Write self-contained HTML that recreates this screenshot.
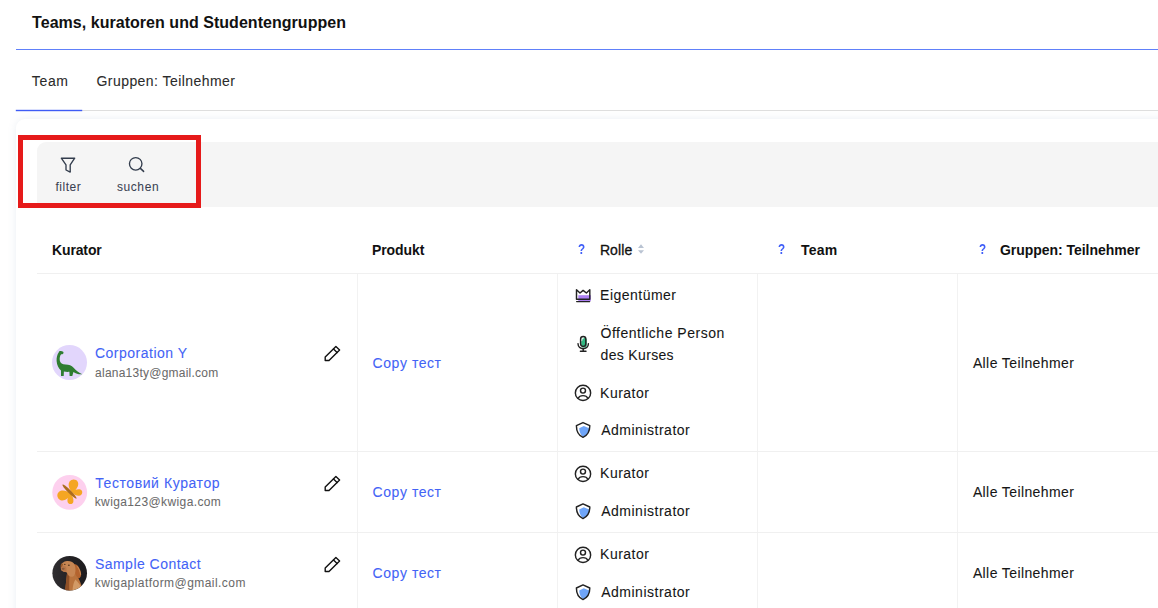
<!DOCTYPE html>
<html lang="de">
<head>
<meta charset="utf-8">
<title>Teams, kuratoren und Studentengruppen</title>
<style>
*{box-sizing:border-box;margin:0;padding:0}
html,body{width:1158px;height:608px;overflow:hidden;background:#fff}
body{font-family:"Liberation Sans",sans-serif;color:#161616;position:relative;font-size:14px}
.a{position:absolute}
.t{position:absolute;white-space:nowrap;line-height:20px}
svg{position:absolute;overflow:visible}
.hline{left:16px;top:49px;width:1142px;height:1px;background:#6080fa}
.tabline{left:16px;top:110px;width:1142px;height:1px;background:#dedede}
.tabact{left:16px;top:110px;width:66px;height:1px;background:#3f5cf5;box-shadow:0 0 0 .2px #3f5cf5}
.card{left:16px;top:118.5px;width:1180px;height:520px;background:#fff;border-radius:9px;box-shadow:0 0 9px rgba(100,130,170,.13)}
.toolbar{left:37px;top:142px;width:1140px;height:65px;background:#f5f5f5;border-top-left-radius:9px}
.red{left:17.5px;top:135px;width:183.5px;height:73px;border:5px solid #e61a1a}
.hb{left:37px;width:1121px;height:1px;background:#f0f0f0}
.vb{top:274px;width:1px;height:340px;background:#f2f2f2}
</style>
</head>
<body>
<div class="a hline"></div>
<div class="a tabline"></div>
<div class="a tabact"></div>
<div class="a card"></div>
<div class="a toolbar"></div>

<!-- toolbar icons -->
<svg style="left:0;top:0" width="1158" height="608" viewBox="0 0 1158 608" fill="none" stroke-linecap="round" stroke-linejoin="round">
  <!-- funnel -->
  <path d="M61.3 158.2H74.7L70.2 164.9V172.1L66 170V164.9Z" stroke="#333d4d" stroke-width="1.35"/>
  <!-- search -->
  <circle cx="135.7" cy="163.8" r="6.25" stroke="#333d4d" stroke-width="1.35"/>
  <path d="M140.4 168.4L143.6 171.4" stroke="#333d4d" stroke-width="1.5"/>
  <!-- sort arrows -->
  <path d="M641 244.2L644 248H638Z" fill="#b9c3d2" stroke="none"/>
  <path d="M641 253.8L644 250.2H638Z" fill="#b9c3d2" stroke="none"/>
</svg>

<div class="a red"></div>

<div class="a hb" style="top:273px"></div>
<div class="a vb" style="left:357px"></div>
<div class="a vb" style="left:557px"></div>
<div class="a vb" style="left:757px"></div>
<div class="a vb" style="left:957px"></div>
<div class="a hb" style="top:451px"></div>
<div class="a hb" style="top:532px"></div>

<svg style="left:0;top:0" width="1158" height="608" viewBox="0 0 1158 608" fill="none" stroke-linecap="round" stroke-linejoin="round">
<g transform="translate(0 0)">
<rect x="578.3" y="295.2" width="12.5" height="5.9" fill="#ad80f3"/>
<path d="M576.5 289.8L580 293L583.1 290.4L586.4 293L589.8 289.8V299.3H576.5Z" stroke="#222" stroke-width="1.45" fill="none"/>
<path d="M576.7 301.6H589.6" stroke="#222" stroke-width="1.45"/></g>
<g transform="translate(0 0)">
<rect x="581.2" y="337.6" width="5.6" height="10" rx="2.6" fill="#2fb982"/>
<path d="M581.6 340.5C581.6 338.6 582.6 337.8 583.6 337.8" stroke="#eafaf3" stroke-width="1.4" fill="none"/>
<rect x="580.6" y="336.5" width="5.2" height="9.9" rx="2.6" stroke="#222" stroke-width="1.45" fill="none"/>
<path d="M578 343.6C578 350.4 588.4 350.4 588.4 343.6" stroke="#222" stroke-width="1.45" fill="none"/>
<path d="M583.2 348.8V351.3M580.4 351.3H586" stroke="#222" stroke-width="1.45"/></g>
<g transform="translate(0 0)">
<circle cx="583" cy="392.9" r="7.65" stroke="#222" stroke-width="1.45" fill="none"/>
<circle cx="583" cy="390.6" r="2.5" stroke="#222" stroke-width="1.45" fill="none"/>
<path d="M578.3 398.1C579.6 394.8 586.4 394.8 587.7 398.1" stroke="#222" stroke-width="1.45" fill="none"/></g>
<g transform="translate(0 0)">
<path d="M583.8 426L589.2 428.2C589.2 432 587.6 435 583.4 437C580.6 435.2 579.2 431.5 579.2 428.2Z" fill="#6fa5f8"/>
<path d="M583 422.6L589.8 425.7C589.8 431.2 588 435.1 583 437.3C578 435.1 576.4 431.2 576.4 425.7Z" stroke="#222" stroke-width="1.45" fill="none"/></g>
<g transform="translate(0 0)">
<path d="M325.2 357.1L335.9 346.4L339.6 349.9L329 360.5H325.2Z" stroke="#111" stroke-width="1.4" fill="none"/>
<path d="M333.5 349L337.1 352.5" stroke="#111" stroke-width="1.4"/></g>
<g transform="translate(0 81)">
<circle cx="583" cy="392.9" r="7.65" stroke="#222" stroke-width="1.45" fill="none"/>
<circle cx="583" cy="390.6" r="2.5" stroke="#222" stroke-width="1.45" fill="none"/>
<path d="M578.3 398.1C579.6 394.8 586.4 394.8 587.7 398.1" stroke="#222" stroke-width="1.45" fill="none"/></g>
<g transform="translate(0 81.3)">
<path d="M583.8 426L589.2 428.2C589.2 432 587.6 435 583.4 437C580.6 435.2 579.2 431.5 579.2 428.2Z" fill="#6fa5f8"/>
<path d="M583 422.6L589.8 425.7C589.8 431.2 588 435.1 583 437.3C578 435.1 576.4 431.2 576.4 425.7Z" stroke="#222" stroke-width="1.45" fill="none"/></g>
<g transform="translate(0 130)">
<path d="M325.2 357.1L335.9 346.4L339.6 349.9L329 360.5H325.2Z" stroke="#111" stroke-width="1.4" fill="none"/>
<path d="M333.5 349L337.1 352.5" stroke="#111" stroke-width="1.4"/></g>
<g transform="translate(0 162)">
<circle cx="583" cy="392.9" r="7.65" stroke="#222" stroke-width="1.45" fill="none"/>
<circle cx="583" cy="390.6" r="2.5" stroke="#222" stroke-width="1.45" fill="none"/>
<path d="M578.3 398.1C579.6 394.8 586.4 394.8 587.7 398.1" stroke="#222" stroke-width="1.45" fill="none"/></g>
<g transform="translate(0 162.3)">
<path d="M583.8 426L589.2 428.2C589.2 432 587.6 435 583.4 437C580.6 435.2 579.2 431.5 579.2 428.2Z" fill="#6fa5f8"/>
<path d="M583 422.6L589.8 425.7C589.8 431.2 588 435.1 583 437.3C578 435.1 576.4 431.2 576.4 425.7Z" stroke="#222" stroke-width="1.45" fill="none"/></g>
<g transform="translate(0 211)">
<path d="M325.2 357.1L335.9 346.4L339.6 349.9L329 360.5H325.2Z" stroke="#111" stroke-width="1.4" fill="none"/>
<path d="M333.5 349L337.1 352.5" stroke="#111" stroke-width="1.4"/></g>
<circle cx="69.5" cy="362.5" r="17.5" fill="#e2d6fc"/>
<path d="M58.7 352.4C59 351 60.6 350.6 61.7 351.3C62.9 351.2 63.7 352 63.5 352.9C63.3 353.9 62.2 354.4 61.2 354.2C60 355.3 59.4 358 59.8 360.6C60.2 363.4 62.4 364.5 65.6 364.5C69 364.5 71.6 365.6 73.6 367.8C76 370.4 79 372.8 82.3 374.2C79.2 374.6 76.2 373.8 73.4 372L72.3 375.9H69.6L69.4 371.8C67.8 372 65.6 371.9 63.9 371.5L63.7 375.9H61L61 370.6C58.6 368.6 56.9 365 56.6 361C56.4 357.4 57.3 354.2 58.7 352.4Z" fill="#2f7d32" stroke="none"/>
<circle cx="69.7" cy="492.4" r="17.4" fill="#fdd0ee"/>
<g fill="#f5a623" stroke="none">
<path d="M71.6 492.2C69 488.5 67.6 484.5 69.6 481.6C71.6 478.8 76.2 478.9 77.8 482C79.4 485.2 76.6 489.6 72.6 492.6Z"/>
<path d="M72.2 491.6C74.8 489.6 78.6 488.6 80.8 489.8C83 491.2 82.6 494.4 80.2 495.4C77.6 496.4 74.4 495 72.4 493Z"/>
<path d="M70 493.4C66.5 490.4 61.6 489.6 58.8 492C56.2 494.4 57.2 498.8 60.6 500.2C64.2 501.6 68.4 498.4 70.6 494.6Z"/>
<path d="M69.6 494.2C67.4 497 66.6 501.2 68.4 503.2C70.2 505 73 504 73.4 501.4C73.8 498.8 72.4 496 71 494Z"/>
</g>
<ellipse cx="69.5" cy="491.6" rx="9.9" ry="1.55" transform="rotate(45 69.5 491.6)" fill="#ab6d1e" stroke="none"/>
<clipPath id="c3"><circle cx="69.7" cy="573.2" r="17.3"/></clipPath>
<linearGradient id="g3" x1="0" y1="0" x2="1" y2="0"><stop offset="0" stop-color="#302e31"/><stop offset="0.5" stop-color="#232124"/><stop offset="1" stop-color="#1e1c1f"/></linearGradient>
<filter id="b3" x="-10%" y="-10%" width="120%" height="120%"><feGaussianBlur stdDeviation="0.45"/></filter>
<circle cx="69.7" cy="573.2" r="17.3" fill="url(#g3)"/>
<g clip-path="url(#c3)" stroke="none"><g filter="url(#b3)">
<path d="M65 592C65.6 586 66.4 579.5 67 573.5L75.8 572C77.6 576.5 80.2 581.5 81.6 586L82.2 592Z" fill="#b9733d"/>
<path d="M65 592C65.6 586 66.4 579.5 67 573.5L69.6 573.5C69.2 579 69 586 69.4 592Z" fill="#8e4f26"/>
<path d="M72.4 592C72.6 587 73.4 582.5 75.4 579.5C77.6 581.5 80 584.5 81.4 587.5L82 592Z" fill="#d29a66"/>
<path d="M73.6 564C76.8 563.8 79 566.6 80.4 570.6C81.6 574 81.4 577 79.6 578C78 578.6 76.6 577 75.6 574.6C74.6 571.8 74 567.4 73.6 564Z" fill="#b4642e"/>
<path d="M77.4 566.6C79 568.6 80.2 571.6 80.6 574.4" stroke="#d79b66" stroke-width="0.7" fill="none"/>
<path d="M61 566.6C61 563.6 63.6 561.4 67 561C70.6 560.8 73.8 562.2 74.8 565.2C75.8 568.4 75.8 572.4 74.4 575.2C73.2 577.2 70.2 577.4 68.6 575.6C67.6 574.4 67.4 573 66.4 572.2C64.8 572 62.4 571.6 61.4 570.2C60.8 569.2 60.9 567.8 61 566.6Z" fill="#c78653"/>
<path d="M61 566.2C60.8 567.8 60.8 569.2 61.4 570.2C62.4 571.4 64.6 571.8 66.2 571.8C66.8 570 66.6 568 65.8 566.6C64.4 565.6 62.4 565.4 61 566.2Z" fill="#b8774a"/>
<path d="M61.4 563.4C60.6 564.6 60.4 566.4 60.8 567.6C61.8 567 62.8 565.6 63.2 564Z" fill="#9a5a2c"/>
<ellipse cx="68.9" cy="565.2" rx="1" ry="0.7" fill="#5d3a22"/>
<ellipse cx="64.8" cy="564.4" rx="0.8" ry="0.6" fill="#5d3a22"/>
<ellipse cx="63.2" cy="568.8" rx="1.5" ry="1.1" fill="#8a5a3a"/>
</g></g>
</svg>

<div class="t" style="left:32.1px;top:13.46px;font-size:16px;font-weight:700;color:#111;letter-spacing:0.035px;">Teams, kuratoren und Studentengruppen</div>
<div class="t" style="left:31.7px;top:71.15px;font-size:14px;font-weight:400;color:#2b2b2b;letter-spacing:0.701px;-webkit-text-stroke:0.08px #2b2b2b;">Team</div>
<div class="t" style="left:96.5px;top:71.15px;font-size:14px;font-weight:400;color:#2b2b2b;letter-spacing:0.442px;-webkit-text-stroke:0.08px #2b2b2b;">Gruppen: Teilnehmer</div>
<div class="t" style="left:55.4px;top:176.84px;font-size:12px;font-weight:400;color:#3a4252;letter-spacing:0.539px;-webkit-text-stroke:0.05px #3a4252;">filter</div>
<div class="t" style="left:116.9px;top:176.84px;font-size:12px;font-weight:400;color:#3a4252;letter-spacing:0.602px;-webkit-text-stroke:0.05px #3a4252;">suchen</div>
<div class="t" style="left:52.0px;top:240.15px;font-size:14px;font-weight:700;color:#111;letter-spacing:-0.136px;">Kurator</div>
<div class="t" style="left:371.9px;top:240.15px;font-size:14px;font-weight:700;color:#111;letter-spacing:-0.047px;">Produkt</div>
<div class="t" style="left:599.9px;top:240.15px;font-size:14px;font-weight:400;color:#111;letter-spacing:0.116px;-webkit-text-stroke:0.3px #111;">Rolle</div>
<div class="t" style="left:801.0px;top:240.15px;font-size:14px;font-weight:700;color:#111;letter-spacing:0.193px;">Team</div>
<div class="t" style="left:999.9px;top:240.15px;font-size:14px;font-weight:700;color:#111;letter-spacing:-0.031px;">Gruppen: Teilnehmer</div>
<div class="t" style="left:578.4px;top:239.39px;font-size:14.6px;font-weight:700;color:#3f5ef8;letter-spacing:0.000px;transform:scaleX(.8);transform-origin:0 0;">?</div>
<div class="t" style="left:778.2px;top:239.39px;font-size:14.6px;font-weight:700;color:#3f5ef8;letter-spacing:0.000px;transform:scaleX(.8);transform-origin:0 0;">?</div>
<div class="t" style="left:978.5px;top:239.39px;font-size:14.6px;font-weight:700;color:#3f5ef8;letter-spacing:0.000px;transform:scaleX(.8);transform-origin:0 0;">?</div>
<div class="t" style="left:94.9px;top:343.15px;font-size:14px;font-weight:400;color:#4363f6;letter-spacing:0.506px;-webkit-text-stroke:0.08px #4363f6;">Corporation Y</div>
<div class="t" style="left:95.1px;top:362.84px;font-size:12px;font-weight:400;color:#6a6a6a;letter-spacing:0.233px;-webkit-text-stroke:0.05px #6a6a6a;">alana13ty@gmail.com</div>
<div class="t" style="left:372.6px;top:353.15px;font-size:14px;font-weight:400;color:#4363f6;letter-spacing:0.552px;-webkit-text-stroke:0.08px #4363f6;">Copy тест</div>
<div class="t" style="left:600.1px;top:285.15px;font-size:14px;font-weight:400;color:#161616;letter-spacing:0.476px;-webkit-text-stroke:0.08px #161616;">Eigentümer</div>
<div class="t" style="left:600.5px;top:323.15px;font-size:14px;font-weight:400;color:#161616;letter-spacing:0.526px;-webkit-text-stroke:0.08px #161616;">Öffentliche Person</div>
<div class="t" style="left:600.6px;top:345.15px;font-size:14px;font-weight:400;color:#161616;letter-spacing:0.327px;-webkit-text-stroke:0.08px #161616;">des Kurses</div>
<div class="t" style="left:600.1px;top:383.15px;font-size:14px;font-weight:400;color:#161616;letter-spacing:0.476px;-webkit-text-stroke:0.08px #161616;">Kurator</div>
<div class="t" style="left:601.2px;top:420.15px;font-size:14px;font-weight:400;color:#161616;letter-spacing:0.508px;-webkit-text-stroke:0.08px #161616;">Administrator</div>
<div class="t" style="left:972.9px;top:353.15px;font-size:14px;font-weight:400;color:#161616;letter-spacing:0.392px;-webkit-text-stroke:0.08px #161616;">Alle Teilnehmer</div>
<div class="t" style="left:95.2px;top:473.15px;font-size:14px;font-weight:400;color:#4363f6;letter-spacing:0.583px;-webkit-text-stroke:0.08px #4363f6;">Тестовий Куратор</div>
<div class="t" style="left:94.7px;top:491.84px;font-size:12px;font-weight:400;color:#6a6a6a;letter-spacing:0.389px;-webkit-text-stroke:0.05px #6a6a6a;">kwiga123@kwiga.com</div>
<div class="t" style="left:372.6px;top:482.15px;font-size:14px;font-weight:400;color:#4363f6;letter-spacing:0.552px;-webkit-text-stroke:0.08px #4363f6;">Copy тест</div>
<div class="t" style="left:600.1px;top:463.15px;font-size:14px;font-weight:400;color:#161616;letter-spacing:0.476px;-webkit-text-stroke:0.08px #161616;">Kurator</div>
<div class="t" style="left:601.2px;top:501.15px;font-size:14px;font-weight:400;color:#161616;letter-spacing:0.508px;-webkit-text-stroke:0.08px #161616;">Administrator</div>
<div class="t" style="left:972.9px;top:482.15px;font-size:14px;font-weight:400;color:#161616;letter-spacing:0.392px;-webkit-text-stroke:0.08px #161616;">Alle Teilnehmer</div>
<div class="t" style="left:94.9px;top:554.15px;font-size:14px;font-weight:400;color:#4363f6;letter-spacing:0.479px;-webkit-text-stroke:0.08px #4363f6;">Sample Contact</div>
<div class="t" style="left:94.7px;top:572.84px;font-size:12px;font-weight:400;color:#6a6a6a;letter-spacing:0.446px;-webkit-text-stroke:0.05px #6a6a6a;">kwigaplatform@gmail.com</div>
<div class="t" style="left:372.6px;top:563.15px;font-size:14px;font-weight:400;color:#4363f6;letter-spacing:0.552px;-webkit-text-stroke:0.08px #4363f6;">Copy тест</div>
<div class="t" style="left:600.1px;top:544.15px;font-size:14px;font-weight:400;color:#161616;letter-spacing:0.476px;-webkit-text-stroke:0.08px #161616;">Kurator</div>
<div class="t" style="left:601.2px;top:582.15px;font-size:14px;font-weight:400;color:#161616;letter-spacing:0.508px;-webkit-text-stroke:0.08px #161616;">Administrator</div>
<div class="t" style="left:972.9px;top:563.15px;font-size:14px;font-weight:400;color:#161616;letter-spacing:0.392px;-webkit-text-stroke:0.08px #161616;">Alle Teilnehmer</div>
</body>
</html>
